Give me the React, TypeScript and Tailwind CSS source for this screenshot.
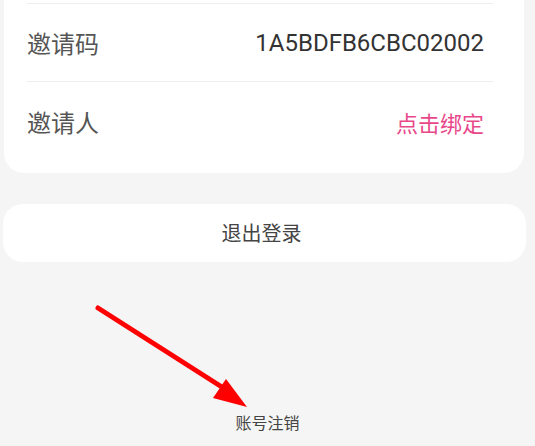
import React from "react";

const cjk = { fontFamily: '"Noto Sans CJK SC", "Noto Sans", sans-serif' };

export default function App() {
  return (
    <div className="relative w-[535px] h-[446px] bg-[#f5f5f5] overflow-hidden" style={cjk}>
      <div className="ml-[4px] w-[520px] bg-white rounded-b-[20px] pt-[3px] pb-[11px]">
        <div className="ml-[23px] mr-[31px] h-px bg-[#efefef]" />
        <div className="flex items-center justify-between h-[77px] ml-[23px] mr-[40px]">
          <span className="text-[24px] text-[#555] leading-none">邀请码</span>
          <span
            className="text-[24px] text-[#333] leading-none"
            style={{ fontFamily: 'Roboto, "Liberation Sans", sans-serif' }}
          >
            1A5BDFB6CBC02002
          </span>
        </div>
        <div className="ml-[23px] mr-[31px] h-px bg-[#efefef]" />
        <div className="flex items-center justify-between h-[80px] ml-[23px] mr-[40px]">
          <span className="text-[24px] text-[#555] leading-none">邀请人</span>
          <span className="text-[22px] text-[#e8488a] leading-none">点击绑定</span>
        </div>
      </div>
      <div className="mt-[31px] ml-[3px] w-[523px] h-[58px] bg-white rounded-[20px] flex items-center justify-center pr-[6px]">
        <span className="text-[20px] text-[#444] leading-none">退出登录</span>
      </div>
      <div className="mt-[152px] flex justify-center">
        <span className="text-[16px] text-[#444] leading-none">账号注销</span>
      </div>
      <svg className="absolute left-0 top-0" width="535" height="446" viewBox="0 0 535 446">
        <line x1="98" y1="308" x2="225" y2="389" stroke="#f00" strokeWidth="5" strokeLinecap="round" />
        <polygon points="247,407 213,398 226,379" fill="#f00" />
      </svg>
    </div>
  );
}
